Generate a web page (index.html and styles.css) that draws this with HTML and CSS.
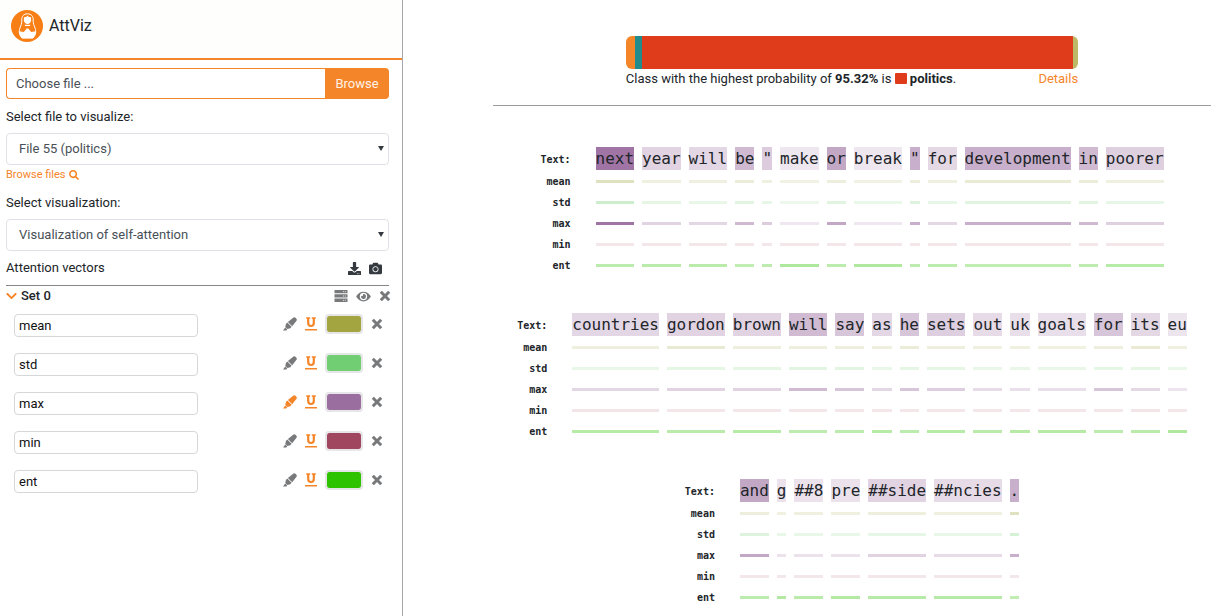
FILE: index.html
```html
<!DOCTYPE html>
<html lang="en">
<head>
<meta charset="utf-8">
<title>AttViz</title>
<link rel="stylesheet" href="styles.css">
</head>
<body>
<svg class="sprite" aria-hidden="true">
  <symbol id="times" viewBox="0 0 12 12"><path d="M1.800 1.800L10.200 10.200M10.200 1.800L1.800 10.200" fill="none" stroke="currentColor" stroke-width="3"/></symbol>
  <symbol id="marker" viewBox="0 0 14 14"><path d="M0 13.400L2.200 10.600L4.200 12.600L3.400 13.400ZM2.300 10L2.900 7L4.300 5.600L8.600 9.800L7.300 11.300L4.400 12ZM4.900 5.100L10.500.5Q11.500-.2 12.500.8L13.400 1.700Q14.200 2.700 13.500 3.700L9.200 9.200Z" fill="currentColor"/></symbol>
  <symbol id="underline" viewBox="0 0 12 14"><path d="M1.200 1H5.200M6.800 1H10.800M0 12.800H12" fill="none" stroke="currentColor" stroke-width="1.500"/><path d="M3.200 1V6Q3.200 9 6 9T8.800 6V1" fill="none" stroke="currentColor" stroke-width="2.200"/></symbol>
</svg>
<div class="app">
  <aside class="sidebar">
    <header class="brand">
      <svg class="logo" viewBox="0 0 32 32" aria-hidden="true">
        <circle cx="16" cy="16" r="16" fill="#f77f16"/>
        <path d="M16.500 3.800C12.300 3.800 10.600 6.800 10.800 10C11 13.500 9.900 15.300 8.900 18.200C7.700 21.800 8.200 24.500 11 28H22C24.800 24.500 25.300 21.800 24.100 18.200C23.100 15.300 22 13.500 22.200 10C22.400 6.800 20.700 3.800 16.500 3.800Z" fill="#f77f16" stroke="#fff" stroke-width="1"/>
        <path d="M16.500 5.700L18 7L20 7.200L20.100 10.700Q19.500 13.700 16.500 14Q13.500 13.700 12.900 10.700L13 7.200L15 7Z" fill="#fff"/>
        <path d="M13.800 15.400H19.200" stroke="#fff" stroke-width="1.300"/>
        <path d="M8.200 21.200L12.800 22L15.800 18.600H17.200L20.200 22L24.800 21.200Q25.300 25.500 21.500 28.200H11.500Q7.700 25.500 8.200 21.200Z" fill="#fff"/>
      </svg>
      <span>AttViz</span>
    </header>
    <form class="controls">
      <div class="file-row">
        <input class="file-name" type="text" placeholder="Choose file ..." aria-label="Choose file">
        <button class="browse" type="button">Browse</button>
      </div>
      <label class="field-label" for="file">Select file to visualize:</label>
      <div class="select-wrap"><select id="file"><option>File 55 (politics)</option></select></div>
      <a class="browse-link" href="#files">Browse files
        <svg viewBox="0 0 512 512" aria-hidden="true"><path fill="currentColor" d="M505 442.700L405.300 343c-4.500-4.500-10.600-7-17-7H372c27.600-35.300 44-79.700 44-128C416 93.100 322.900 0 208 0S0 93.100 0 208s93.100 208 208 208c48.300 0 92.700-16.400 128-44v16.300c0 6.400 2.500 12.500 7 17l99.700 99.700c9.400 9.400 24.600 9.400 33.900 0l28.300-28.300c9.400-9.400 9.400-24.600.1-34zM208 336c-70.700 0-128-57.200-128-128 0-70.700 57.200-128 128-128 70.700 0 128 57.200 128 128 0 70.700-57.200 128-128 128z"/></svg></a>
      <label class="field-label" for="view">Select visualization:</label>
      <div class="select-wrap"><select id="view"><option>Visualization of self-attention</option></select></div>
      <div class="vectors-head">
        <span>Attention vectors</span>
        <button class="icon" type="button" aria-label="Download"><svg width="13" height="13" viewBox="0 0 512 512"><path fill="currentColor" d="M216 0h80c13.300 0 24 10.700 24 24v168h87.700c17.800 0 26.700 21.500 14.100 34.100L269.700 378.300c-7.500 7.500-19.800 7.500-27.300 0L90.100 226.100c-12.600-12.600-3.700-34.100 14.100-34.100H192V24c0-13.300 10.700-24 24-24zm296 376v112c0 13.300-10.700 24-24 24H24c-13.300 0-24-10.700-24-24V376c0-13.300 10.700-24 24-24h146.700l49 49c20.100 20.100 52.500 20.100 72.600 0l49-49H488c13.300 0 24 10.700 24 24zm-124 88c0-11-9-20-20-20s-20 9-20 20 9 20 20 20 20-9 20-20zm64 0c0-11-9-20-20-20s-20 9-20 20 9 20 20 20 20-9 20-20z"/></svg></button>
        <button class="icon" type="button" aria-label="Take picture"><svg width="13" height="13" viewBox="0 0 512 512"><path fill="currentColor" d="M512 144v288c0 26.500-21.500 48-48 48H48c-26.500 0-48-21.500-48-48V144c0-26.500 21.500-48 48-48h88l12.300-32.900c7-18.700 24.900-31.100 44.900-31.100h125.500c20 0 37.900 12.400 44.900 31.100L376 96h88c26.500 0 48 21.500 48 48zM376 288c0-66.200-53.800-120-120-120s-120 53.800-120 120 53.800 120 120 120 120-53.800 120-120zm-32 0c0 48.500-39.500 88-88 88s-88-39.500-88-88 39.500-88 88-88 88 39.500 88 88z"/></svg></button>
      </div>
      <div class="set-head">
        <button class="icon orange" type="button" aria-label="Collapse set"><svg width="11" height="12" viewBox="0 0 448 512"><path fill="currentColor" d="M207 381.500L12.700 187.100c-9.400-9.400-9.400-24.600 0-33.900l22.700-22.700c9.400-9.400 24.500-9.400 33.900 0L224 284.500l154.700-154c9.400-9.300 24.500-9.300 33.900 0l22.700 22.700c9.400 9.400 9.400 24.600 0 33.900L241 381.500c-9.400 9.400-24.600 9.400-34 0z"/></svg></button>
        <strong>Set 0</strong>
        <button class="icon" type="button" aria-label="Layers"><svg width="14" height="12" viewBox="0 0 14 12"><path fill="currentColor" d="M.5 0h13v3.300H.5zM.5 4.300h13v3.300H.5zM.5 8.600h13v3.300H.5z"/><path d="M9 1.700h3M9 6h3M9 10.300h3" stroke="#fff" stroke-width=".8" stroke-dasharray="1 .8"/></svg></button>
        <button class="icon" type="button" aria-label="Toggle visibility"><svg width="15" height="13" viewBox="0 0 576 512"><path fill="currentColor" d="M572.500 241.400C518.300 135.600 410.900 64 288 64S57.700 135.600 3.500 241.400a32.400 32.400 0 0 0 0 29.200C57.700 376.400 165.100 448 288 448s230.300-71.600 284.500-177.400a32.400 32.400 0 0 0 0-29.200zM288 400a144 144 0 1 1 144-144 143.900 143.900 0 0 1-144 144zm0-240a95.300 95.300 0 0 0-25.300 3.800 47.900 47.900 0 0 1-66.900 66.900A95.800 95.800 0 1 0 288 160z"/></svg></button>
        <button class="icon" type="button" aria-label="Remove set"><svg width="12" height="12"><use href="#times"/></svg></button>
      </div>
      <div class="vectors" id="vectors"></div>
    </form>
  </aside>
  <main class="content">
    <section class="summary">
      <div class="result">
        <div class="stack">
          <span class="seg-a"></span><span class="seg-b"></span><span class="seg-c"></span><span class="seg-d"></span>
        </div>
        <div class="caption">
          <span>Class with the highest probability of <b>95.32%</b> is <i class="chip"></i> <b>politics</b>.</span>
          <a href="#details">Details</a>
        </div>
      </div>
    </section>
    <section id="lines"></section>
  </main>
</div>
<script src="app.js"></script>
</body>
</html>
```
FILE: styles.css
```css
* { box-sizing: border-box; }
body { margin: 0; font: 13px/20px Roboto, sans-serif; color: #212529; background: #fff; }
button, input, select { font: inherit; color: inherit; }
a { color: #f58529; text-decoration: none; }
.sprite { display: none; }

.app { display: grid; grid-template-columns: minmax(280px, 403fr) 821fr; min-height: 100vh; }
.sidebar { border-right: 1px solid #a5a8aa; }
.brand { display: flex; align-items: center; gap: 6px; height: 60px; padding: 0 11px 6px; border-bottom: 2px solid #f58529; background: #fefefc; font-size: 16px; }
.logo { width: 32px; height: 32px; }
.controls { padding: 8px 13px 8px 6px; }

.file-row { display: flex; height: 31px; }
.file-name { flex: 1; min-width: 0; padding: 0 9px; border: 1px solid #f58529; border-right: 0; border-radius: 4px 0 0 4px; background: #fff; }
.file-name::placeholder { color: #495057; opacity: 1; }
.browse { width: 64px; padding: 0; border: 0; border-radius: 0 4px 4px 0; background: #f58529; color: #fff3e8; }

.field-label { display: block; margin: 8px 0 6px; }
.select-wrap { position: relative; }
.select-wrap::after { content: ""; position: absolute; right: 5px; top: 13px; border: solid transparent; border-width: 5px 3px 0; border-top-color: #343a40; pointer-events: none; }
select { display: block; appearance: none; width: 100%; height: 32px; padding: 0 12px; border: 1px solid #dee2e6; border-radius: 4px; background: #fff; color: #495057; }
.browse-link { display: flex; align-items: center; gap: 3px; height: 20px; font-size: 11px; }
.browse-link svg { width: 10px; height: 10px; }

.icon { display: flex; padding: 0; border: 0; background: none; color: #77797b; }
.orange { color: #f58529; }
.vectors-head { display: flex; align-items: center; gap: 8px; height: 35px; padding-right: 7px; border-bottom: 1px solid #85888b; }
.vectors-head span { flex: 1; }
.vectors-head .icon { color: #343a40; }
.set-head { display: flex; align-items: center; gap: 8px; height: 20px; margin-right: -2px; }
.set-head strong { flex: 1; font-weight: 500; }
.set-head .orange { margin-right: -4px; }

.vectors { display: grid; gap: 16px; padding: 8px 6px 0 8px; }
.vector { display: flex; align-items: flex-start; gap: 8px; }
.vector input[type=text] { width: 184px; height: 23px; margin-right: auto; padding: 0 4px; border: 1px solid #d5d7d9; border-radius: 4px; color: #111; }
.vector .icon { height: 20px; align-items: center; }
.swatch { width: 38px; height: 20px; padding: 0; border: 2px solid #e6e6e8; border-radius: 4px; background: #e6e6e8; }
.swatch::-webkit-color-swatch-wrapper { padding: 0; }
.swatch::-webkit-color-swatch { border: 0; border-radius: 2px; }

.content { padding: 36px 13px 0 90px; }
.summary { padding-bottom: 16px; margin-bottom: 41px; border-bottom: 1px solid #999c9e; }
.result { width: 63%; min-width: 450px; margin: 0 auto; }
.stack { display: flex; height: 33px; border-radius: 6px; overflow: hidden; }
.seg-a { flex: 9; background: #f58529; }
.seg-b { flex: 7; background: #218c8b; }
.seg-c { flex: 429; background: #de3c1b; }
.seg-d { flex: 5; background: #bdb966; }
.caption { display: flex; justify-content: space-between; }
.caption b { font-weight: 700; }
.chip { display: inline-block; width: 12px; height: 11px; border-radius: 1px; background: #de3c1b; vertical-align: -1px; }

.line { display: flex; justify-content: center; margin-bottom: 37px; font-family: "DejaVu Sans Mono", monospace; }
.names { margin-right: 25px; font-size: 10px; font-weight: 700; line-height: 21px; text-align: right; }
.names span { display: block; }
.names span:first-child { line-height: 24px; padding-top: 1px; margin-bottom: -1px; }
.tokens { display: flex; gap: 8px; }
.word { display: block; height: 23px; margin-bottom: 1px; font-size: 16px; line-height: 23px; }
.mark { display: block; height: 3px; margin: 10px 0 18px; }
.mark:last-child { margin-bottom: 9px; }
```
FILE: app.js
```js
const vectors = [
  { name: "mean", color: "#a2a540", rgb: "162,165,64" },
  { name: "std", color: "#72ce72", rgb: "112,206,112" },
  { name: "max", color: "#9b6ea0", rgb: "155,110,160", highlighted: true },
  { name: "min", color: "#a0465f", rgb: "160,70,95" },
  { name: "ent", color: "#2dc300", rgb: "45,195,0" }
];

// Each token: text, then its mean, std, max, min and ent values.
const lines = [
  [["next", .33, .35, .95, .13, .32], ["year", .17, .18, .3, .13, .33], ["will", .17, .16, .28, .13, .33], ["be", .2, .2, .48, .13, .3], ["\"", .17, .17, .35, .13, .31], ["make", .14, .14, .17, .13, .39], ["or", .19, .22, .6, .13, .32], ["break", .14, .15, .17, .13, .38], ["\"", .19, .24, .55, .13, .31], ["for", .17, .17, .27, .13, .32], ["development", .22, .22, .55, .13, .3], ["in", .2, .21, .48, .13, .31], ["poorer", .17, .17, .32, .13, .34]],
  [["countries", .18, .16, .28, .14, .34], ["gordon", .23, .19, .3, .13, .33], ["brown", .18, .18, .3, .13, .34], ["will", .18, .2, .47, .13, .31], ["say", .18, .2, .4, .13, .32], ["as", .18, .16, .28, .13, .34], ["he", .2, .18, .4, .13, .32], ["sets", .18, .18, .33, .13, .34], ["out", .17, .16, .25, .13, .33], ["uk", .17, .16, .22, .13, .35], ["goals", .16, .16, .22, .13, .35], ["for", .18, .19, .4, .13, .32], ["its", .22, .18, .27, .14, .33], ["eu", .17, .15, .18, .13, .38]],
  [["and", .19, .24, .6, .13, .32], ["g", .16, .16, .2, .13, .36], ["##8", .17, .16, .2, .13, .33], ["pre", .17, .16, .2, .13, .36], ["##side", .18, .17, .3, .13, .35], ["##ncies", .17, .16, .25, .13, .35], [".", .33, .28, .55, .13, .3]]
];

document.getElementById("vectors").innerHTML = vectors.map(v => `
  <div class="vector">
    <input type="text" value="${v.name}" aria-label="Vector name">
    <button class="icon ${v.highlighted ? "orange" : ""}" type="button" aria-label="Highlight ${v.name}"><svg width="14" height="14"><use href="#marker"/></svg></button>
    <button class="icon orange" type="button" aria-label="Underline ${v.name}"><svg width="12" height="14"><use href="#underline"/></svg></button>
    <input class="swatch" type="color" value="${v.color}" aria-label="Color of ${v.name}">
    <button class="icon" type="button" aria-label="Remove ${v.name}"><svg width="12" height="12"><use href="#times"/></svg></button>
  </div>`).join("");

const token = ([text, ...values]) => `<div><span class="word" style="background:rgba(${vectors[2].rgb},${values[2]})">${text}</span>` +
  values.map((a, i) => `<span class="mark" style="background:rgba(${vectors[i].rgb},${a})"></span>`).join("") + "</div>";

document.getElementById("lines").innerHTML = lines.map(tokens => `
  <div class="line">
    <div class="names"><span>Text:</span>${vectors.map(v => `<span>${v.name}</span>`).join("")}</div>
    <div class="tokens">${tokens.map(token).join("")}</div>
  </div>`).join("");
```
